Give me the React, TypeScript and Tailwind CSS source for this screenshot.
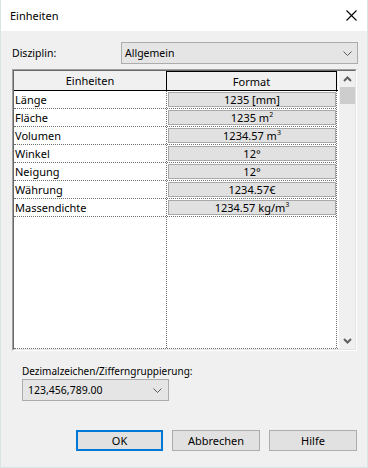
const rows = [
  { name: 'Länge', value: <>1235 [mm]</> },
  { name: 'Fläche', value: <>1235 m<sup className="text-[7px] -top-[5px]">2</sup></> },
  { name: 'Volumen', value: <>1234.57 m<sup className="text-[7px] -top-[5px]">3</sup></> },
  { name: 'Winkel', value: <>12°</> },
  { name: 'Neigung', value: <>12°</> },
  { name: 'Währung', value: <>1234.57€</> },
  { name: 'Massendichte', value: <>1234.57 kg/m<sup className="text-[7px] -top-[5px]">3</sup></> },
]

function ComboArrow() {
  return (
    <svg width="9" height="5" viewBox="0 0 9 5" fill="none" stroke="#5a5a5a" strokeWidth="1">
      <polyline points="0.5,0.5 4.5,4.5 8.5,0.5" />
    </svg>
  )
}

function ScrollArrow({ up }: { up?: boolean }) {
  return (
    <svg width="9" height="6" viewBox="0 0 9 6" fill="none" stroke="#606060" strokeWidth="2">
      {up ? <polyline points="1,5 4.5,1.5 8,5" /> : <polyline points="1,1 4.5,4.5 8,1" />}
    </svg>
  )
}

export default function App() {
  return (
    <div className="w-[368px] h-[468px] bg-[#f0f0f0] border-x border-b border-[#d6e6e2] flex flex-col font-['Noto_Sans',sans-serif] text-[11px] text-black leading-none">
      <div className="h-[31px] bg-white flex items-center justify-between pl-[9px] pr-[10px] shrink-0">
        <span>Einheiten</span>
        <svg width="11" height="11" viewBox="0 0 11 11" stroke="#000" strokeWidth="1.1">
          <line x1="0.5" y1="0.5" x2="10.5" y2="10.5" />
          <line x1="10.5" y1="0.5" x2="0.5" y2="10.5" />
        </svg>
      </div>

      <div className="flex items-center pt-[11px] pl-[11px] text-[10.5px]">
        <span className="w-[109px]">Disziplin:</span>
        <div className="w-[237px] h-[22px] bg-[#e5e5e5] border border-[#acacac] flex items-center justify-between pl-[3px] pr-[5px]">
          <span>Allgemein</span>
          <ComboArrow />
        </div>
      </div>

      <div className="mt-[5px] ml-[11px] w-[345px] h-[282px] border-t border-l border-[#a0a0a0] border-r border-b border-r-white border-b-white">
        <div className="w-full h-full border-t border-l border-[#696969] border-r border-b border-r-[#e3e3e3] border-b-[#e3e3e3] bg-white flex">
          <div className="w-[324px] flex flex-col">
            <div className="flex h-[20px] border-b border-black bg-[#f0f0f0] shrink-0">
              <div className="w-[153px] border-r border-black flex items-center justify-center">Einheiten</div>
              <div className="w-[170px] border-r border-t border-black flex items-center justify-center">Format</div>
            </div>
            <div className="flex flex-1 border-b border-dotted border-[#707070]">
              <div className="w-[153px] border-r border-dotted border-[#707070]">
                {rows.map(r => (
                  <div key={r.name} className="h-[18px] border-b border-dotted border-[#707070] flex items-center pl-[1px]">
                    {r.name}
                  </div>
                ))}
              </div>
              <div className="w-[170px] border-r border-dotted border-[#707070]">
                {rows.map(r => (
                  <div key={r.name} className="h-[18px] border-b border-dotted border-[#707070] pl-[1px] pt-[1px]">
                    <div className="h-[15px] bg-[#e1e1e1] border border-[#a8a8a8] flex items-center justify-center">
                      <span>{r.value}</span>
                    </div>
                  </div>
                ))}
              </div>
            </div>
          </div>
          <div className="flex-1 bg-[#f0f0f0] flex flex-col items-center ml-[1px]">
            <div className="h-[16px] w-full flex items-center justify-center">
              <ScrollArrow up />
            </div>
            <div className="w-[15px] h-[17px] bg-[#cdcdcd]" />
            <div className="flex-1" />
            <div className="h-[17px] w-full flex items-center justify-center">
              <ScrollArrow />
            </div>
          </div>
        </div>
      </div>

      <div className="pl-[21px] mt-[15px] text-[10px]">Dezimalzeichen/Zifferngruppierung:</div>
      <div className="ml-[21px] mt-[3px] w-[147px] h-[22px] bg-[#e5e5e5] border border-[#acacac] flex items-center justify-between pl-[5px] pr-[6px] text-[10.5px]">
        <span>123,456,789.00</span>
        <ComboArrow />
      </div>

      <div className="mt-[29px] flex justify-end gap-[9px] pr-[10px]">
        <button className="w-[87px] h-[21px] bg-[#e1e1e1] border-2 border-[#0078d7]">OK</button>
        <button className="w-[88px] h-[21px] bg-[#e1e1e1] border border-[#adadad]">Abbrechen</button>
        <button className="w-[88px] h-[21px] bg-[#e1e1e1] border border-[#adadad]">Hilfe</button>
      </div>
    </div>
  )
}
